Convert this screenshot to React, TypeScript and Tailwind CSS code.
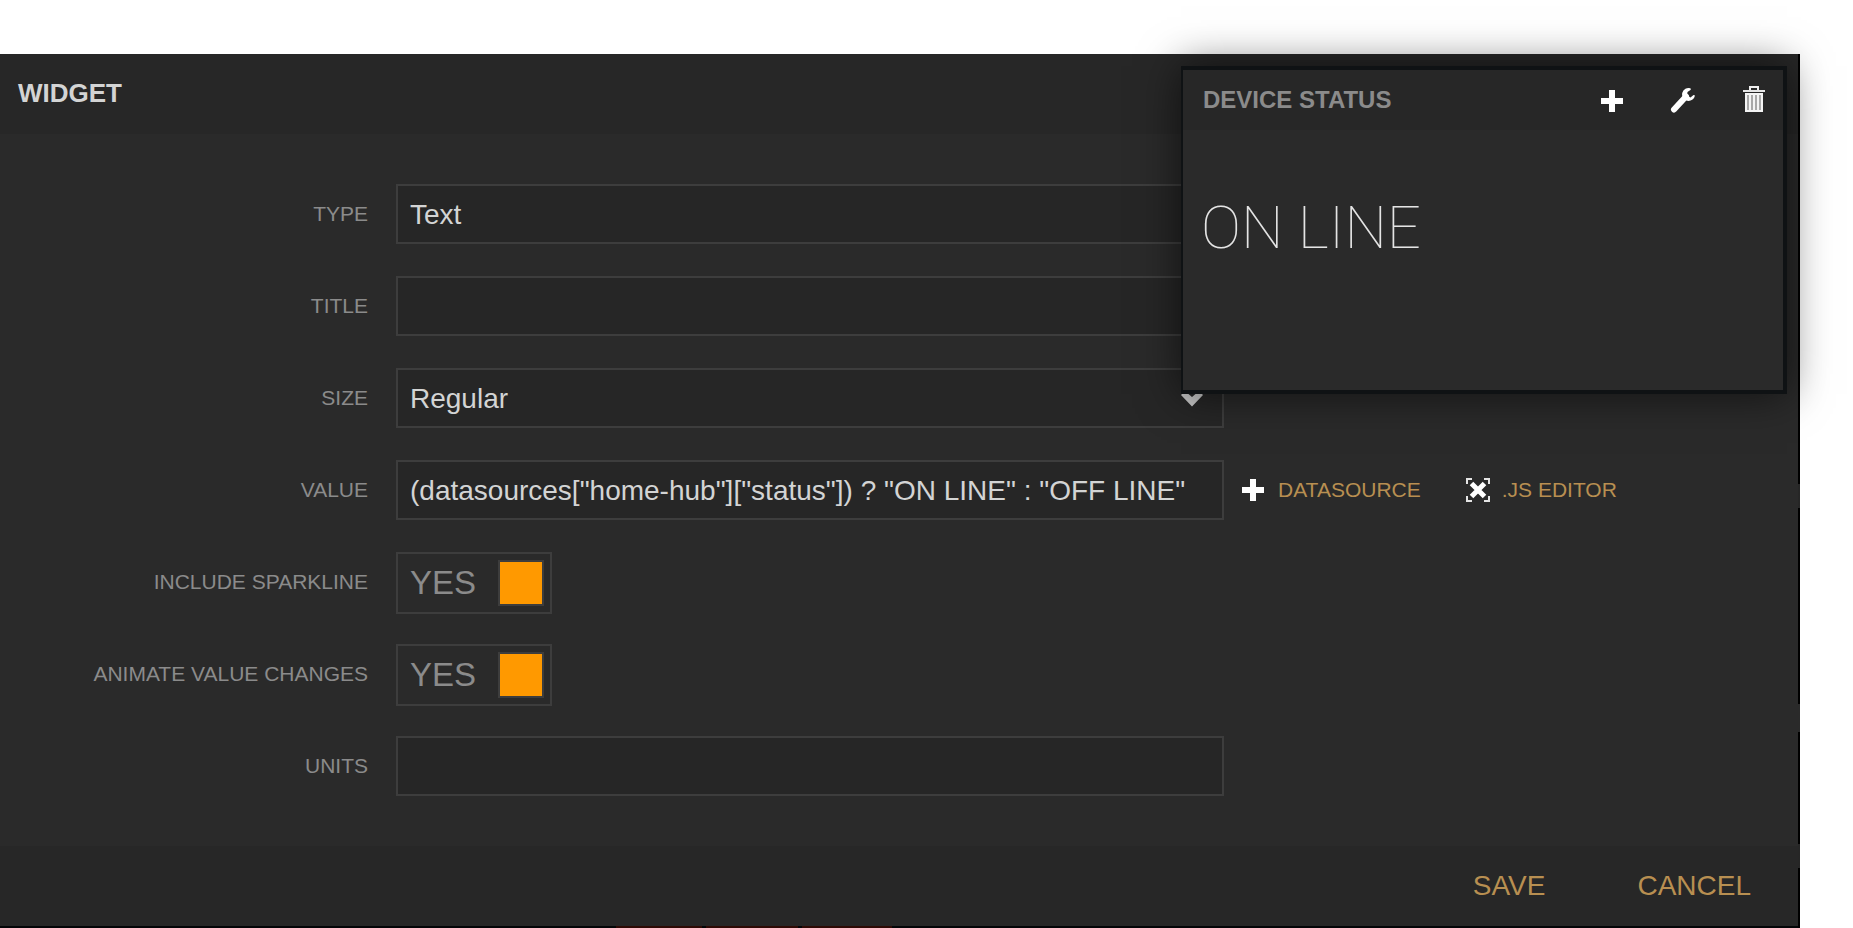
import React from "react";

const inputBox =
  "block h-[60px] w-full appearance-none rounded-none border-2 border-[#3d3d3d] bg-[#262626] px-3 pt-[2px] text-[28px] text-[#d3d4d4] outline-none";

function PlusIcon() {
  return (
    <svg width="24" height="24" viewBox="0 0 24 24" fill="#fff" aria-hidden="true">
      <path d="M9 1h6v8h8v6h-8v8H9v-8H1V9h8z" />
    </svg>
  );
}

function WrenchIcon() {
  return (
    <svg width="26" height="26" viewBox="0 0 26 26" aria-hidden="true">
      <path d="M4 22.500 L16 9.500" stroke="#fff" strokeWidth="6" strokeLinecap="round" />
      <path d="M20.500 1.200 A6.500 6.500 0 1 0 25 8.500 L23.500 8 L20.500 10.500 L17 8.500 L17.500 5 L20.800 2.800 Z" fill="#fff" />
    </svg>
  );
}

function TrashIcon() {
  return (
    <svg width="24" height="28" viewBox="0 0 24 28" fill="none" aria-hidden="true">
      <path d="M8 5V2h8v3" stroke="#eee" strokeWidth="2" />
      <path d="M1 5h22v2H1z" fill="#e6e6e6" />
      <path d="M3 8h18v19H3z" fill="#f4f4f4" />
      <path d="M6 10v15M10 10v15M14 10v15M18 10v15" stroke="#a8a8a8" strokeWidth="2" />
    </svg>
  );
}

function ExpandIcon() {
  return (
    <svg width="24" height="26" viewBox="0 0 24 26" fill="none" stroke="#fff" aria-hidden="true">
      <path d="M1 7V2h5M18 2h5v5M23 19v5h-5M6 24H1v-5" stroke="#e4e4e4" strokeWidth="2" />
      <path d="M5.500 6.500l13 13M18.500 6.500l-13 13" strokeWidth="5" />
    </svg>
  );
}

function Row({ id, label, children }: { id: string; label: string; children: React.ReactNode }) {
  return (
    <div className="flex h-[60px] items-start">
      <label htmlFor={id} className="w-[368px] shrink-0 text-right text-[21px] leading-[60px] text-[#8b8b8b]">
        {label}
      </label>
      <div className="ml-7 flex min-w-0 flex-1 items-center">{children}</div>
    </div>
  );
}

function Field({ children }: { children: React.ReactNode }) {
  return <div className="relative w-[828px] min-w-0">{children}</div>;
}

function SelectField({ id, options }: { id: string; options: string[] }) {
  return (
    <Field>
      <select id={id} className={inputBox}>
        {options.map((o) => (
          <option key={o}>{o}</option>
        ))}
      </select>
      <svg className="pointer-events-none absolute top-5 right-5" width="24" height="20" viewBox="0 0 24 20" aria-hidden="true">
        <path d="M1 7l4-4 7 6 7-6 4 4-11 11.500z" fill="#c8c8c8" />
      </svg>
    </Field>
  );
}

function Toggle({ id }: { id: string }) {
  return (
    <span className="relative flex h-[62px] w-[156px] items-center justify-between border-2 border-[#3d3d3d] pr-[6px] pl-3">
      <input id={id} type="checkbox" defaultChecked className="peer absolute inset-0 size-full cursor-pointer appearance-none" />
      <span className="pb-[2px] text-[33px] leading-none text-[#8b8b8b]">YES</span>
      <span className="size-[46px] border-2 border-[#3d3d3d] bg-[#ff9900]" />
    </span>
  );
}

export default function App() {
  return (
    <div className="relative min-h-screen overflow-hidden bg-white pt-[54px] font-['Liberation_Sans',Arial,sans-serif]">
      <main className="relative mr-[53px] bg-black pr-[2px]">
        <span className="absolute top-[430px] right-0 h-6 w-[2px] bg-[#262626]" />
        <span className="absolute top-[650px] right-0 h-7 w-[2px] bg-[#2a2a2a]" />
        <span className="absolute top-[790px] right-0 h-6 w-[2px] bg-[#262626]" />
        <header className="h-20 bg-[#272727] px-[18px] pt-[21px]">
          <h1 className="text-[26px] leading-9 font-bold text-[#d3d4d4]">WIDGET</h1>
        </header>
        <form className="flex flex-col gap-8 bg-[#2a2a2a] py-[50px]">
          <Row id="type" label="TYPE">
            <SelectField id="type" options={["Text"]} />
          </Row>
          <Row id="title" label="TITLE">
            <Field>
              <input id="title" type="text" className={inputBox} />
            </Field>
          </Row>
          <Row id="size" label="SIZE">
            <SelectField id="size" options={["Regular", "Big"]} />
          </Row>
          <Row id="value" label="VALUE">
            <Field>
              <input
                id="value"
                type="text"
                className={inputBox}
                defaultValue={'(datasources["home-hub"]["status"]) ? "ON LINE" : "OFF LINE"'}
              />
            </Field>
            <button type="button" className="ml-[17px] flex shrink-0 items-center gap-[13px] text-[21px] text-[#b88f51]">
              <PlusIcon />
              DATASOURCE
            </button>
            <button type="button" className="ml-[45px] flex shrink-0 items-center gap-3 text-[21px] text-[#b88f51]">
              <ExpandIcon />
              .JS EDITOR
            </button>
          </Row>
          <Row id="sparkline" label="INCLUDE SPARKLINE">
            <Toggle id="sparkline" />
          </Row>
          <Row id="animate" label="ANIMATE VALUE CHANGES">
            <Toggle id="animate" />
          </Row>
          <Row id="units" label="UNITS">
            <Field>
              <input id="units" type="text" className={inputBox} />
            </Field>
          </Row>
        </form>
        <footer className="flex h-20 items-center justify-end gap-[92px] bg-[#272727] pr-[47px] text-[28px] text-[#b88f51]">
          <button type="button">SAVE</button>
          <button type="button">CANCEL</button>
        </footer>
        <div className="flex h-[2px] gap-1 bg-[#030507] pl-[616px]">
          <span className="w-[86px] bg-[#2e0a05]" />
          <span className="w-[92px] bg-[#2e0a05]" />
          <span className="w-[90px] bg-[#2e0a05]" />
        </div>
      </main>

      <section className="absolute top-[66px] right-[66px] h-[328px] w-[606px] border-y-4 border-r-4 border-l-2 border-[#0f1214] bg-[#2a2a2a] shadow-[0_0_40px_rgba(0,0,0,0.6)]">
        <header className="flex h-[60px] items-center justify-between bg-[#272727] pr-[17px] pl-5">
          <h2 className="text-[24px] font-bold text-[#8b8b8b]">DEVICE STATUS</h2>
          <div className="flex items-center gap-[46px]">
            <button type="button" aria-label="Add" className="pt-[2px]"><PlusIcon /></button>
            <button type="button" aria-label="Settings"><WrenchIcon /></button>
            <button type="button" aria-label="Delete" className="pb-[2px]"><TrashIcon /></button>
          </div>
        </header>
        <p className="pt-[66px] pl-[18px] font-[Roboto,sans-serif] text-[60px] leading-[64px] font-thin text-[#e4e4e4]">
          ON LINE
        </p>
      </section>
    </div>
  );
}
